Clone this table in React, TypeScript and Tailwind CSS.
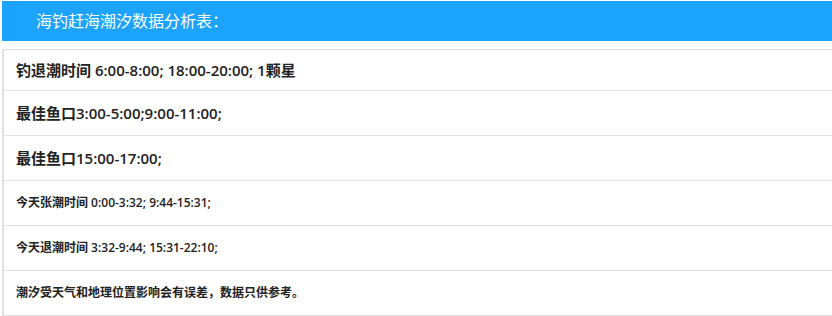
import React from "react";

const font = { fontFamily: '"Open Sans", "Noto Sans CJK SC", sans-serif' };

export default function App() {
  const big = [
    "钓退潮时间 6:00-8:00; 18:00-20:00; 1颗星",
    "最佳鱼口3:00-5:00;9:00-11:00;",
    "最佳鱼口15:00-17:00;",
  ];
  const small = [
    "今天张潮时间 0:00-3:32; 9:44-15:31;",
    "今天退潮时间 3:32-9:44; 15:31-22:10;",
    "潮汐受天气和地理位置影响会有误差，数据只供参考。",
  ];
  return (
    <div className="w-[832px] h-[316px] bg-white pt-[1px] pl-[2px]" style={font}>
      <div className="h-[40px] bg-[#1ba3fe] flex items-center pl-[34px] text-white text-[16px]">
        海钓赶海潮汐数据分析表：
      </div>
      <div className="mt-[8px] border-t border-l-2 border-[#dfe1e6] border-t-[#e1e1e1]">
        {big.map((t, i) => (
          <div
            key={t}
            className={`${i === 0 ? "h-[41px]" : "h-[45px]"} border-b border-[#e1e1e1] flex items-center pl-[12px] text-[15px] font-semibold text-[#222]`}
          >
            {t}
          </div>
        ))}
        {small.map((t) => (
          <div
            key={t}
            className="h-[45px] border-b border-[#e1e1e1] flex items-center pl-[12px] text-[12px] font-semibold text-[#222]"
          >
            {t}
          </div>
        ))}
      </div>
    </div>
  );
}
